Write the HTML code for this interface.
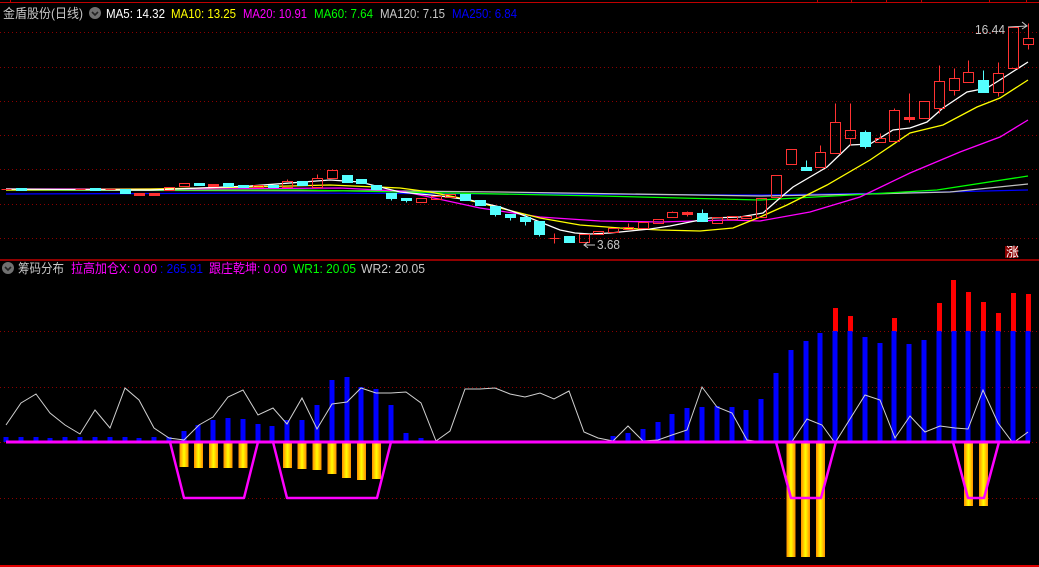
<!DOCTYPE html>
<html><head><meta charset="utf-8"><style>
html,body{margin:0;padding:0;background:#000;width:1039px;height:567px;overflow:hidden}
svg{display:block}
text{font-family:"Liberation Sans","Noto Sans CJK SC",sans-serif;font-size:13px}
</style></head><body>
<svg width="1039" height="567" viewBox="0 0 1039 567" xmlns="http://www.w3.org/2000/svg">
<defs>
<linearGradient id="og" x1="0" x2="1" y1="0" y2="0">
<stop offset="0" stop-color="#ff8c00"/><stop offset="0.5" stop-color="#ffff00"/><stop offset="1" stop-color="#ff8c00"/>
</linearGradient>
</defs>
<rect width="1039" height="567" fill="#000"/>
<line x1="0" y1="2.5" x2="1039" y2="2.5" stroke="#c00000" stroke-width="1"/>
<g stroke="#c00000"><line x1="10.5" y1="0" x2="10.5" y2="3"/><line x1="817.5" y1="0" x2="817.5" y2="3"/><line x1="851.5" y1="0" x2="851.5" y2="3"/><line x1="886.5" y1="0" x2="886.5" y2="3"/><line x1="921.5" y1="0" x2="921.5" y2="3"/><line x1="989.5" y1="0" x2="989.5" y2="3"/><line x1="1026.5" y1="0" x2="1026.5" y2="3"/></g>
<line x1="0" y1="260" x2="1039" y2="260" stroke="#c00000" stroke-width="1.5"/>
<line x1="0" y1="566" x2="1039" y2="566" stroke="#e00000" stroke-width="2"/>
<g stroke="#8b0000" stroke-width="1" stroke-dasharray="1 3">
<line x1="0" y1="32.5" x2="1039" y2="32.5"/><line x1="0" y1="67.5" x2="1039" y2="67.5"/><line x1="0" y1="101.5" x2="1039" y2="101.5"/><line x1="0" y1="135.5" x2="1039" y2="135.5"/><line x1="0" y1="169.5" x2="1039" y2="169.5"/><line x1="0" y1="204.5" x2="1039" y2="204.5"/><line x1="0" y1="238.5" x2="1039" y2="238.5"/>
<line x1="0" y1="331.5" x2="1039" y2="331.5"/><line x1="0" y1="387.5" x2="1039" y2="387.5"/><line x1="0" y1="442.5" x2="1039" y2="442.5"/><line x1="0" y1="498.5" x2="1039" y2="498.5"/>
</g>
<text x="3" y="18" fill="#c8c8c8" textLength="80" lengthAdjust="spacingAndGlyphs">金盾股份(日线)</text>
<circle cx="95" cy="13" r="6" fill="#707070"/><path d="M92 12 L95 15 L98 12" stroke="#222" stroke-width="1.6" fill="none"/>
<text x="106" y="18" fill="#fff" textLength="59" lengthAdjust="spacingAndGlyphs">MA5: 14.32</text>
<text x="171" y="18" fill="#ffff00" textLength="65" lengthAdjust="spacingAndGlyphs">MA10: 13.25</text>
<text x="243" y="18" fill="#ff00ff" textLength="64" lengthAdjust="spacingAndGlyphs">MA20: 10.91</text>
<text x="314" y="18" fill="#00ff00" textLength="59" lengthAdjust="spacingAndGlyphs">MA60: 7.64</text>
<text x="380" y="18" fill="#c8c8c8" textLength="65" lengthAdjust="spacingAndGlyphs">MA120: 7.15</text>
<text x="452" y="18" fill="#0000ff" textLength="65" lengthAdjust="spacingAndGlyphs">MA250: 6.84</text>
<g fill="none" stroke-width="1.3">
<polyline stroke="#0000ff" points="6,194 300,193 500,194 760,195 900,193 1028,190"/>
<polyline stroke="#c0c0c0" points="6,190 400,191 500,192 760,196 870,194 950,192 1028,184"/>
<polyline stroke="#00ff00" points="6,190 300,190 400,192 600,196 760,200 870,194 937,190 1028,176"/>
<polyline stroke="#ff00ff" points="6,189 200,189 340,188 400,191 420,195 480,208 540,217 600,221 660,222 730,220 760,221 810,212 860,197 910,173 960,152 1000,137 1028,120"/>
<polyline stroke="#ffff00" points="6,190 150,189 250,187 330,185 400,188 430,192 460,198 500,208 540,218 580,225 620,228 660,230 700,231 733,228 760,217 787,205 827,185 870,160 910,133 943,125 977,107 1000,98 1028,80"/>
<polyline stroke="#ffffff" points="6,189 150,190 250,186 330,180 360,182 400,192 420,194 440,196 470,200 500,207 520,214 540,222 560,230 575,233 590,234 610,233 630,231 650,229 670,226 690,222 710,218 740,217 763,213 780,198 793,187 827,167 850,145 870,144 893,130 910,128 927,122 943,108 967,92 987,88 1003,78 1028,62"/>
</g>
<g fill="#54ffff" stroke="#54ffff" stroke-width="1" shape-rendering="crispEdges" transform="translate(0.5,0.5)">
<rect x="16" y="188" width="10" height="2"/><rect x="90" y="188" width="10" height="2"/>
<rect x="120" y="189" width="10" height="4"/>
<rect x="194" y="183" width="10" height="2"/><rect x="223" y="183" width="10" height="3"/><rect x="238" y="185" width="10" height="2"/><rect x="268" y="185" width="10" height="2"/><rect x="297" y="181" width="10" height="4"/>
<rect x="342" y="175" width="10" height="7"/><rect x="356" y="179" width="10" height="4"/><rect x="371" y="185" width="10" height="4"/><rect x="386" y="193" width="10" height="5"/>
<rect x="401" y="198" width="10" height="2"/><rect x="460" y="194" width="10" height="6"/><rect x="475" y="200" width="10" height="5"/><rect x="490" y="206" width="10" height="8"/><rect x="505" y="214" width="10" height="3"/><rect x="520" y="217" width="10" height="4"/><rect x="534" y="221" width="10" height="13"/><rect x="564" y="236" width="10" height="6"/><rect x="697" y="213" width="10" height="8"/>
<rect x="801" y="167" width="10" height="3"/><rect x="860" y="132" width="10" height="14"/><rect x="978" y="80" width="10" height="12"/>
<line x1="391" y1="198" x2="391" y2="200"/><line x1="406" y1="200" x2="406" y2="202"/><line x1="495" y1="214" x2="495" y2="216"/><line x1="510" y1="217" x2="510" y2="220"/><line x1="525" y1="214" x2="525" y2="225"/><line x1="539" y1="234" x2="539" y2="236"/><line x1="702" y1="209" x2="702" y2="213"/><line x1="806" y1="160" x2="806" y2="167"/><line x1="865" y1="130" x2="865" y2="148"/><line x1="983" y1="70" x2="983" y2="80"/>
</g>
<g fill="none" stroke="#ff3232" stroke-width="1" shape-rendering="crispEdges" transform="translate(0.5,0.5)">
<line x1="1" y1="189" x2="11" y2="189"/><line x1="75" y1="189" x2="85" y2="189"/><line x1="105" y1="189" x2="115" y2="189"/>
<rect x="134" y="193" width="10" height="2" fill="#ff3232"/><rect x="149" y="193" width="10" height="2" fill="#ff3232"/>
<rect x="164" y="187" width="10" height="3"/><rect x="179" y="183" width="10" height="3"/><rect x="208" y="184" width="10" height="2" fill="#ff3232"/><rect x="253" y="185" width="10" height="2"/>
<rect x="282" y="181" width="10" height="6"/><line x1="287" y1="179" x2="287" y2="181"/>
<rect x="312" y="178" width="10" height="9"/><line x1="317" y1="174" x2="317" y2="178"/>
<rect x="327" y="170" width="10" height="8"/><line x1="332" y1="169" x2="332" y2="170"/>
<rect x="416" y="198" width="10" height="4"/><rect x="431" y="196" width="10" height="3"/><rect x="445" y="194" width="10" height="3"/>
<line x1="549" y1="238" x2="559" y2="238"/><line x1="554" y1="233" x2="554" y2="243"/>
<rect x="579" y="234" width="10" height="8"/><rect x="593" y="231" width="10" height="3"/><rect x="608" y="228" width="10" height="4"/>
<rect x="623" y="227" width="10" height="2"/><line x1="628" y1="223" x2="628" y2="227"/>
<rect x="638" y="222" width="10" height="6"/><rect x="653" y="219" width="10" height="4"/>
<rect x="667" y="212" width="10" height="5"/><line x1="672" y1="211" x2="672" y2="212"/>
<rect x="682" y="212" width="10" height="2" fill="#ff3232"/><line x1="687" y1="211" x2="687" y2="216"/>
<rect x="712" y="217" width="10" height="6"/><rect x="727" y="216" width="10" height="3"/><rect x="741" y="216" width="10" height="2"/>
<rect x="756" y="198" width="10" height="19"/><rect x="771" y="175" width="10" height="22"/>
<rect x="786" y="149" width="10" height="15"/>
<rect x="815" y="152" width="10" height="15"/><line x1="820" y1="145" x2="820" y2="152"/>
<rect x="830" y="122" width="10" height="31"/><line x1="835" y1="103" x2="835" y2="122"/>
<rect x="845" y="130" width="10" height="8"/><line x1="850" y1="103" x2="850" y2="130"/><line x1="850" y1="138" x2="850" y2="145"/>
<rect x="875" y="138" width="10" height="4"/><line x1="880" y1="133" x2="880" y2="138"/>
<rect x="889" y="110" width="10" height="31"/><line x1="894" y1="108" x2="894" y2="110"/>
<rect x="904" y="117" width="10" height="2" fill="#ff3232"/><line x1="909" y1="93" x2="909" y2="122"/>
<rect x="919" y="101" width="10" height="17"/>
<rect x="934" y="81" width="10" height="27"/><line x1="939" y1="65" x2="939" y2="81"/><line x1="939" y1="108" x2="939" y2="113"/>
<rect x="949" y="78" width="10" height="12"/><line x1="954" y1="68" x2="954" y2="78"/><line x1="954" y1="90" x2="954" y2="95"/>
<rect x="963" y="72" width="10" height="10"/><line x1="968" y1="60" x2="968" y2="72"/>
<rect x="993" y="73" width="10" height="19"/><line x1="998" y1="62" x2="998" y2="73"/><line x1="998" y1="92" x2="998" y2="96"/>
<rect x="1008" y="27" width="10" height="41"/>
<rect x="1023" y="38" width="10" height="6"/><line x1="1028" y1="23" x2="1028" y2="38"/><line x1="1028" y1="44" x2="1028" y2="49"/>
</g>
<text x="975" y="34" fill="#c8c8c8" font-size="12" textLength="30" lengthAdjust="spacingAndGlyphs">16.44</text>
<path d="M1008 27 L1027 26 M1022 22 L1027 26 L1022 29" stroke="#c8c8c8" fill="none" stroke-width="1"/>
<path d="M584 245 L595 245 M588 242 L584 245 L588 248" stroke="#c8c8c8" fill="none" stroke-width="1"/>
<text x="597" y="249" fill="#c8c8c8" font-size="12" textLength="23" lengthAdjust="spacingAndGlyphs">3.68</text>
<rect x="1005" y="246" width="13" height="12" fill="#8b0000"/>
<text x="1006" y="256.5" fill="#fff" font-size="11">涨</text>
<circle cx="8" cy="268" r="6" fill="#707070"/><path d="M5 267 L8 270 L11 267" stroke="#222" stroke-width="1.6" fill="none"/>
<text x="18" y="273" fill="#c8c8c8" textLength="46" lengthAdjust="spacingAndGlyphs">筹码分布</text>
<text x="71" y="273" fill="#ff00ff" textLength="86" lengthAdjust="spacingAndGlyphs">拉高加仓X: 0.00</text>
<text x="160" y="273" fill="#0000ff" textLength="43" lengthAdjust="spacingAndGlyphs">: 265.91</text>
<text x="209" y="273" fill="#ff00ff" textLength="78" lengthAdjust="spacingAndGlyphs">跟庄乾坤: 0.00</text>
<text x="293" y="273" fill="#00ff00" textLength="63" lengthAdjust="spacingAndGlyphs">WR1: 20.05</text>
<text x="361" y="273" fill="#c8c8c8" textLength="64" lengthAdjust="spacingAndGlyphs">WR2: 20.05</text>
<g fill="#ff0000">
<rect x="833" y="308" width="5" height="24"/><rect x="848" y="316" width="5" height="16"/><rect x="892" y="318" width="5" height="14"/>
<rect x="937" y="303" width="5" height="29"/><rect x="951" y="280" width="5" height="52"/><rect x="966" y="292" width="5" height="40"/><rect x="981" y="302" width="5" height="30"/><rect x="996" y="313" width="5" height="19"/><rect x="1011" y="293" width="5" height="39"/><rect x="1026" y="294" width="5" height="38"/>
</g>
<g fill="#0000ff" transform="translate(-0.5,0)">
<rect x="4" y="437" width="5" height="5"/><rect x="19" y="437" width="5" height="5"/><rect x="34" y="437" width="5" height="5"/><rect x="48" y="438" width="5" height="4"/><rect x="63" y="437" width="5" height="5"/><rect x="78" y="437" width="5" height="5"/><rect x="93" y="437" width="5" height="5"/><rect x="108" y="437" width="5" height="5"/><rect x="123" y="437" width="5" height="5"/><rect x="137" y="438" width="5" height="4"/><rect x="152" y="437" width="5" height="5"/><rect x="167" y="437" width="5" height="5"/>
<rect x="182" y="431" width="5" height="11"/><rect x="196" y="425" width="5" height="17"/><rect x="211" y="420" width="5" height="22"/><rect x="226" y="418" width="5" height="24"/><rect x="241" y="419" width="5" height="23"/><rect x="256" y="424" width="5" height="18"/><rect x="270" y="426" width="5" height="16"/><rect x="285" y="420" width="5" height="22"/><rect x="300" y="420" width="5" height="22"/><rect x="315" y="405" width="5" height="37"/><rect x="330" y="380" width="5" height="62"/><rect x="345" y="377" width="5" height="65"/><rect x="359" y="387" width="5" height="55"/><rect x="374" y="389" width="5" height="53"/><rect x="389" y="405" width="5" height="37"/><rect x="404" y="433" width="5" height="9"/><rect x="419" y="438" width="5" height="4"/>
<rect x="611" y="436" width="5" height="6"/><rect x="626" y="433" width="5" height="9"/><rect x="641" y="429" width="5" height="13"/><rect x="656" y="422" width="5" height="20"/><rect x="670" y="414" width="5" height="28"/><rect x="685" y="408" width="5" height="34"/><rect x="700" y="407" width="5" height="35"/><rect x="715" y="406" width="5" height="36"/><rect x="730" y="407" width="5" height="35"/><rect x="744" y="410" width="5" height="32"/><rect x="759" y="399" width="5" height="43"/><rect x="774" y="373" width="5" height="69"/><rect x="789" y="350" width="5" height="92"/><rect x="804" y="341" width="5" height="101"/><rect x="818" y="333" width="5" height="109"/><rect x="833" y="331" width="5" height="111"/><rect x="848" y="331" width="5" height="111"/><rect x="863" y="337" width="5" height="105"/><rect x="878" y="343" width="5" height="99"/><rect x="892" y="331" width="5" height="111"/><rect x="907" y="344" width="5" height="98"/><rect x="922" y="340" width="5" height="102"/><rect x="937" y="331" width="5" height="111"/><rect x="952" y="331" width="5" height="111"/><rect x="966" y="331" width="5" height="111"/><rect x="981" y="331" width="5" height="111"/><rect x="996" y="331" width="5" height="111"/><rect x="1011" y="331" width="5" height="111"/><rect x="1026" y="331" width="5" height="111"/>
</g>
<g fill="url(#og)">
<rect x="179.5" y="443" width="9" height="24"/><rect x="194" y="443" width="9" height="25"/><rect x="209" y="443" width="9" height="25"/><rect x="223.5" y="443" width="9" height="25"/><rect x="238.5" y="443" width="9" height="25"/>
<rect x="283" y="443" width="9" height="25"/><rect x="297.5" y="443" width="9" height="26"/><rect x="312.5" y="443" width="9" height="27"/><rect x="327.5" y="443" width="9" height="31"/><rect x="342" y="443" width="9" height="35"/><rect x="357" y="443" width="9" height="37"/><rect x="372" y="443" width="9" height="36"/>
<rect x="786.5" y="443" width="9" height="114"/><rect x="801" y="443" width="9" height="114"/><rect x="816" y="443" width="9" height="114"/>
<rect x="964" y="443" width="9" height="63"/><rect x="979" y="443" width="9" height="63"/>
</g>
<polyline fill="none" stroke="#d0d0d0" stroke-width="1" points="6,425 21,403 36,394 50,413 65,425 80,434 95,410 110,428 125,388 139,400 154,428 169,438 184,440 199,425 213,417 228,397 243,390 258,415 273,408 287,424 302,398 317,429 332,404 347,402 361,388 376,393 391,393 406,392 421,403 436,441 450,431 465,389 480,389 495,388 510,394 525,397 540,393 554,399 569,391 584,432 598,438 613,441 628,426 643,441 658,440 672,435 687,430 702,387 717,407 732,413 747,440 762,442 776,442 791,443 807,419 822,425 835,443 865,395 880,400 895,438 910,416 925,432 940,426 955,428 968,429 983,390 998,423 1013,443 1028,432"/>
<line x1="6" y1="442" x2="1030" y2="442" stroke="#ff00ff" stroke-width="3"/>
<g fill="none" stroke="#ff00ff" stroke-width="2.5" stroke-linejoin="round">
<polyline points="170,442 184,498 244,498 258,442"/>
<polyline points="273,442 287,498 377,498 391,442"/>
<polyline points="776,442 791,498 821,498 836,442"/>
<polyline points="953,442 968,498 984,498 999,442"/>
</g>
</svg>
</body></html>
